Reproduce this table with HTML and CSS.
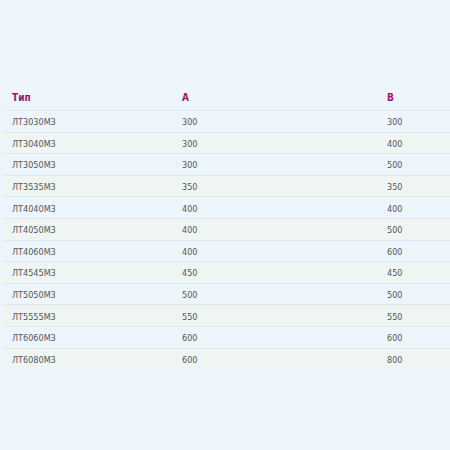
FILE: index.html
```html
<!DOCTYPE html>
<html lang="ru">
<head>
<meta charset="utf-8">
<link rel="stylesheet" href="styles.css">
</head>
<body>
<div class="wrap">
<table class="spec">
<thead>
<tr><th class="c1">Тип</th><th class="c2">A</th><th class="c3">B</th></tr>
</thead>
<tbody>
<tr><td>ЛТ3030М3</td><td>300</td><td>300</td></tr>
<tr><td>ЛТ3040М3</td><td>300</td><td>400</td></tr>
<tr><td>ЛТ3050М3</td><td>300</td><td>500</td></tr>
<tr><td>ЛТ3535М3</td><td>350</td><td>350</td></tr>
<tr><td>ЛТ4040М3</td><td>400</td><td>400</td></tr>
<tr><td>ЛТ4050М3</td><td>400</td><td>500</td></tr>
<tr><td>ЛТ4060М3</td><td>400</td><td>600</td></tr>
<tr><td>ЛТ4545М3</td><td>450</td><td>450</td></tr>
<tr><td>ЛТ5050М3</td><td>500</td><td>500</td></tr>
<tr><td>ЛТ5555М3</td><td>550</td><td>550</td></tr>
<tr><td>ЛТ6060М3</td><td>600</td><td>600</td></tr>
<tr><td>ЛТ6080М3</td><td>600</td><td>800</td></tr>
</tbody>
</table>
</div>
</body>
</html>
```
FILE: styles.css
```css
html, body {
  margin: 0;
  background: #edf5fd;
}
.wrap {
  padding: 83px 0 0 4px;
}
.spec {
  border-collapse: separate;
  border-spacing: 0;
  width: 446px;
  table-layout: fixed;
  font-family: "DejaVu Sans Condensed", "DejaVu Sans", sans-serif;
}
.spec th {
  text-align: left;
  font-size: 10px;
  line-height: 13px;
  font-weight: bold;
  color: #9e1468;
  padding: 8px 8px 6px;
  border-bottom: 1px solid #e2e5ea;
}
.c1 { width: 154px; }
.c2 { width: 189px; }
.spec td {
  font-size: 9px;
  line-height: 12px;
  color: #555;
  padding: 5.3px 8px 3.3px;
  border-bottom: 1px solid #e2e5ea;
}
.spec tbody tr:nth-child(even) td {
  background: #eef5f3;
}
.spec tbody tr:last-child td {
  border-bottom: none;
}
```
